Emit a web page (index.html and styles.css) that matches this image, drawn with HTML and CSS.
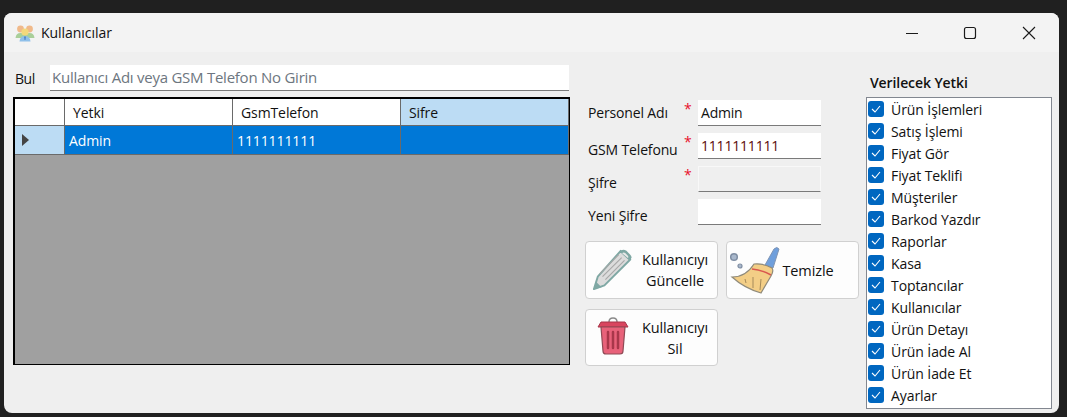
FILE: index.html
```html
<!DOCTYPE html>
<html lang="tr">
<head>
  <meta charset="UTF-8">
  <title>Kullanıcılar</title>
  <link rel="stylesheet" href="styles.css">
</head>
<body>
  <div class="window">
    <header class="titlebar">
      <svg class="app-icon" width="20" height="18" viewBox="0 0 20 18">
        <circle cx="5.5" cy="5" r="3.4" fill="#f0b98a"/>
        <circle cx="14.5" cy="5" r="3.4" fill="#f0b98a"/>
        <path d="M0.5 14 Q1 9 5.5 9 L14.5 9 Q19 9 19.5 14 Z" fill="#a9cf9a"/>
        <circle cx="10" cy="8" r="3.6" fill="#f3d97c"/>
        <path d="M4.5 17.5 Q5 12 10 12 Q15 12 15.500 17.500 Z" fill="#8fc0ea"/>
        <path d="M9 12.500 H11 L10.500 16 H9.500 Z" fill="#4f86c6"/>
      </svg>
      <span class="title">Kullanıcılar</span>
      <div class="controls">
        <svg class="ctl" width="46" height="38" viewBox="0 0 46 38"><path d="M18 19.500 H30" stroke="#1a1a1a" stroke-width="1"/></svg>
        <svg class="ctl" width="46" height="38" viewBox="0 0 46 38"><rect x="17.500" y="13.500" width="11" height="11" rx="2" fill="none" stroke="#1a1a1a" stroke-width="1.200"/></svg>
        <svg class="ctl" width="46" height="38" viewBox="0 0 46 38"><path d="M17 13 L29 25 M29 13 L17 25" stroke="#1a1a1a" stroke-width="1.100"/></svg>
      </div>
    </header>

    <main class="content">
      <section class="left">
        <div class="search">
          <label class="search-label">Bul</label>
          <div class="field search-field placeholder">Kullanıcı Adı veya GSM Telefon No Girin</div>
        </div>
        <div class="grid">
          <div class="grid-row head">
            <div class="cell corner"></div>
            <div class="cell">Yetki</div>
            <div class="cell">GsmTelefon</div>
            <div class="cell active">Sifre</div>
          </div>
          <div class="grid-row selected">
            <div class="cell rowhead"><span class="arrow"></span></div>
            <div class="cell">Admin</div>
            <div class="cell">1111111111</div>
            <div class="cell"></div>
          </div>
        </div>
      </section>

      <section class="middle">
        <div class="form-row">
          <label class="form-label">Personel Adı</label><span class="star">*</span>
          <div class="field">Admin</div>
        </div>
        <div class="form-row">
          <label class="form-label low">GSM Telefonu</label><span class="star">*</span>
          <div class="field maroon">1111111111</div>
        </div>
        <div class="form-row">
          <label class="form-label low">Şifre</label><span class="star">*</span>
          <div class="field disabled"></div>
        </div>
        <div class="form-row">
          <label class="form-label low">Yeni Şifre</label><span class="star"></span>
          <div class="field"></div>
        </div>

        <div class="buttons">
          <button class="btn">
            <svg class="btn-icon pencil" width="44" height="46" viewBox="0 0 46 48">
              <path d="M30 4 L40 13 L13 40 L2 44 L6 31 Z" fill="#dcdcdc" stroke="#7fa8a4" stroke-width="2" stroke-linejoin="round"/>
              <path d="M29 5 Q32 1 36 4 L40 8 Q43 11 39 14 Z" fill="#7fa8a4"/>
              <path d="M31.500 6.500 Q33 5 35 6.500 L37.500 9 Q38.500 10.500 37.500 11.500 Z" fill="#e8e8e8"/>
              <path d="M11 31 L31 11 M14 34 L34 14 M8 28 L28 8" stroke="#a8a8a8" stroke-width="1.200"/>
              <path d="M2 44 L4 36 L10 42 Z" fill="#7fa8a4"/>
            </svg>
            <span class="btn-text pencil-text">Kullanıcıyı<br>Güncelle</span>
          </button>
          <button class="btn">
            <svg class="btn-icon broom" width="50" height="48" viewBox="0 0 50 48">
              <circle cx="4" cy="11" r="3.300" fill="#a9b8cc" stroke="#7f8ea3" stroke-width="1.500"/>
              <circle cx="10" cy="20" r="2" fill="#a9b8cc" stroke="#7f8ea3" stroke-width="1.200"/>
              <path d="M35 19 L44 3 Q47 0 49 3 L43 22 Z" fill="#6f9fdc" stroke="#7f94b3"/>
              <path d="M24 18 Q33 17 42 22 Q44 25 41 30 L31 47 Q14 42 2 31 Q16 31 24 18 Z" fill="#f3ce86" stroke="#8f8a7a" stroke-width="1.200"/>
              <path d="M22 23 Q32 24 41 29" fill="none" stroke="#d9584f" stroke-width="1.500"/>
              <path d="M15 33 L16 37 M23 31 L23 42 M31 33 L30 44" stroke="#a58a5a" stroke-width="1"/>
            </svg>
            <span class="btn-text broom-text">Temizle</span>
          </button>
          <button class="btn btn-short">
            <svg class="btn-icon trash" width="32" height="38" viewBox="0 0 32 38">
              <path d="M12 5 Q12 1 16 1 Q20 1 20 5" fill="none" stroke="#8a8a8a" stroke-width="1.500"/>
              <path d="M4 5 H28 L31 10 H1 Z" fill="#d9455f" stroke="#a8374a"/>
              <path d="M4 10 H28 L26 34 Q26 37 23 37 H9 Q6 37 6 34 Z" fill="#e8627a" stroke="#8f4a55" stroke-width="1.200"/>
              <path d="M11 15 V31 M16 15 V31 M21 15 V31" stroke="#a8374a" stroke-width="2.500" stroke-linecap="round"/>
            </svg>
            <span class="btn-text trash-text">Kullanıcıyı<br>Sil</span>
          </button>
        </div>
      </section>

      <section class="right">
        <div class="list-title">Verilecek Yetki</div>
        <ul class="list">
          <li><span class="check"><svg width="10" height="8" viewBox="0 0 10 8"><path d="M1 4 L4 7 L9 1" fill="none" stroke="#fff" stroke-width="1.100"/></svg></span>Ürün İşlemleri</li>
          <li><span class="check"><svg width="10" height="8" viewBox="0 0 10 8"><path d="M1 4 L4 7 L9 1" fill="none" stroke="#fff" stroke-width="1.100"/></svg></span>Satış İşlemi</li>
          <li><span class="check"><svg width="10" height="8" viewBox="0 0 10 8"><path d="M1 4 L4 7 L9 1" fill="none" stroke="#fff" stroke-width="1.100"/></svg></span>Fiyat Gör</li>
          <li><span class="check"><svg width="10" height="8" viewBox="0 0 10 8"><path d="M1 4 L4 7 L9 1" fill="none" stroke="#fff" stroke-width="1.100"/></svg></span>Fiyat Teklifi</li>
          <li><span class="check"><svg width="10" height="8" viewBox="0 0 10 8"><path d="M1 4 L4 7 L9 1" fill="none" stroke="#fff" stroke-width="1.100"/></svg></span>Müşteriler</li>
          <li><span class="check"><svg width="10" height="8" viewBox="0 0 10 8"><path d="M1 4 L4 7 L9 1" fill="none" stroke="#fff" stroke-width="1.100"/></svg></span>Barkod Yazdır</li>
          <li><span class="check"><svg width="10" height="8" viewBox="0 0 10 8"><path d="M1 4 L4 7 L9 1" fill="none" stroke="#fff" stroke-width="1.100"/></svg></span>Raporlar</li>
          <li><span class="check"><svg width="10" height="8" viewBox="0 0 10 8"><path d="M1 4 L4 7 L9 1" fill="none" stroke="#fff" stroke-width="1.100"/></svg></span>Kasa</li>
          <li><span class="check"><svg width="10" height="8" viewBox="0 0 10 8"><path d="M1 4 L4 7 L9 1" fill="none" stroke="#fff" stroke-width="1.100"/></svg></span>Toptancılar</li>
          <li><span class="check"><svg width="10" height="8" viewBox="0 0 10 8"><path d="M1 4 L4 7 L9 1" fill="none" stroke="#fff" stroke-width="1.100"/></svg></span>Kullanıcılar</li>
          <li><span class="check"><svg width="10" height="8" viewBox="0 0 10 8"><path d="M1 4 L4 7 L9 1" fill="none" stroke="#fff" stroke-width="1.100"/></svg></span>Ürün Detayı</li>
          <li><span class="check"><svg width="10" height="8" viewBox="0 0 10 8"><path d="M1 4 L4 7 L9 1" fill="none" stroke="#fff" stroke-width="1.100"/></svg></span>Ürün İade Al</li>
          <li><span class="check"><svg width="10" height="8" viewBox="0 0 10 8"><path d="M1 4 L4 7 L9 1" fill="none" stroke="#fff" stroke-width="1.100"/></svg></span>Ürün İade Et</li>
          <li><span class="check"><svg width="10" height="8" viewBox="0 0 10 8"><path d="M1 4 L4 7 L9 1" fill="none" stroke="#fff" stroke-width="1.100"/></svg></span>Ayarlar</li>
        </ul>
      </section>
    </main>
  </div>
</body>
</html>
```

FILE: styles.css
```css
html, body {
  margin: 0;
  height: 417px;
  overflow: hidden;
}

body {
  background-color: #202020;
  font-family: "Open Sans", "Noto Sans", sans-serif;
  font-size: 14px;
  color: #111;
  padding: 13px 8px 0 4px;
  box-sizing: border-box;
}

.window {
  height: 400px;
  background-color: #efefef;
  border-radius: 8px;
  overflow: hidden;
  display: flex;
  flex-direction: column;
}

.titlebar {
  height: 39px;
  flex: none;
  background-color: #f3f3f3;
  display: flex;
  align-items: center;
  padding-left: 11px;
}

.app-icon {
  margin-right: 6px;
}

.title {
  font-size: 14px;
  letter-spacing: -0.05px;
}

.controls {
  margin-left: auto;
  display: flex;
  margin-right: 7px;
}

.ctl {
  display: block;
  margin-left: 13px;
}

.content {
  flex: 1;
  display: flex;
  padding: 13px 7px 0 9px;
}

.left {
  width: 557px;
  flex: none;
}

.search {
  display: flex;
  align-items: center;
  height: 26px;
  margin-bottom: 6px;
}

.search-label {
  width: 37px;
  padding-left: 2px;
  box-sizing: border-box;
  letter-spacing: -0.5px;
}

.field {
  width: 123px;
  height: 26px;
  box-sizing: border-box;
  background-color: #fff;
  border-bottom: 1px solid #7a7a7a;
  padding: 0 3px;
  line-height: 25px;
  letter-spacing: -0.2px;
}

.search-field {
  width: 519px;
  padding-left: 2px;
}

.placeholder {
  color: #6d7680;
  font-size: 15px;
  letter-spacing: -0.25px;
}

.maroon {
  color: #5c0a0a;
}

.disabled {
  background-color: #efefef;
  border: 1px solid #f8f8f8;
  border-bottom: 1px solid #7a7a7a;
}

.grid {
  height: 268px;
  box-sizing: border-box;
  border: 2px solid #000;
  border-right-width: 1px;
  border-bottom-width: 1px;
  background-color: #a0a0a0;
}

.grid-row {
  display: grid;
  grid-template-columns: 50px 168px 168px 168px;
  box-sizing: border-box;
}

.cell {
  box-sizing: border-box;
  border-right: 1px solid #6a6a6a;
  border-bottom: 1px solid #6a6a6a;
  letter-spacing: -0.1px;
  white-space: nowrap;
}

.head .cell {
  height: 27px;
  background-color: #fff;
  line-height: 27px;
  padding-left: 8px;
}

.head .corner {
  padding: 0;
}

.head .active {
  background-color: #bcdcf4;
}

.selected .cell {
  height: 29px;
  background-color: #0078d7;
  color: #fff;
  line-height: 29px;
  padding-left: 4px;
}

.selected .rowhead {
  background-color: #bcdcf4;
  padding-left: 7px;
  display: flex;
  align-items: center;
}

.arrow {
  width: 0;
  height: 0;
  border-left: 7px solid #444;
  border-top: 6px solid transparent;
  border-bottom: 6px solid transparent;
}

.middle {
  width: 274px;
  flex: none;
  margin-left: 15px;
  padding-top: 35px;
}

.form-row {
  display: flex;
  height: 26px;
  margin-bottom: 7px;
}

.form-label {
  width: 96px;
  padding-left: 3px;
  box-sizing: border-box;
  line-height: 25px;
  letter-spacing: -0.15px;
  white-space: nowrap;
}

.low {
  line-height: 33px;
}

.star {
  width: 17px;
  color: #e8102c;
  line-height: 18px;
  padding-left: 3px;
  box-sizing: border-box;
}

.buttons {
  display: grid;
  grid-template-columns: 133px 133px;
  column-gap: 8px;
  row-gap: 10px;
  margin-top: 16px;
}

.btn {
  height: 58px;
  padding: 0;
  background-color: #fdfdfd;
  border: 1px solid #d0d0d0;
  border-radius: 4px;
  font-family: inherit;
  font-size: 14.5px;
  color: #111;
  line-height: 21px;
  letter-spacing: -0.1px;
  display: flex;
  align-items: center;
}

.btn-short {
  height: 57px;
}

.btn-icon {
  flex: none;
}

.pencil {
  margin-left: 6px;
}

.broom {
  margin-left: 3px;
}

.trash {
  margin-left: 11px;
  margin-bottom: 3px;
}

.btn-text {
  flex: 1;
  text-align: center;
}

.pencil-text {
  margin-right: 3px;
}

.broom-text {
  margin-right: 22px;
}

.trash-text {
  margin-left: 4px;
}

.right {
  width: 186px;
  flex: none;
  margin-left: 7px;
}

.list-title {
  font-weight: 600;
  height: 32px;
  line-height: 36px;
  padding-left: 4px;
  letter-spacing: -0.1px;
}

.list {
  list-style: none;
  margin: 0;
  padding: 0 1px;
  height: 312px;
  box-sizing: border-box;
  background-color: #fff;
  border: 1px solid #828790;
}

.list li {
  height: 22px;
  display: flex;
  align-items: center;
  letter-spacing: -0.08px;
  white-space: nowrap;
}

.check {
  width: 16px;
  height: 16px;
  flex: none;
  margin-right: 7px;
  background-color: #0067c0;
  border-radius: 3px;
  display: flex;
  align-items: center;
  justify-content: center;
}
```
